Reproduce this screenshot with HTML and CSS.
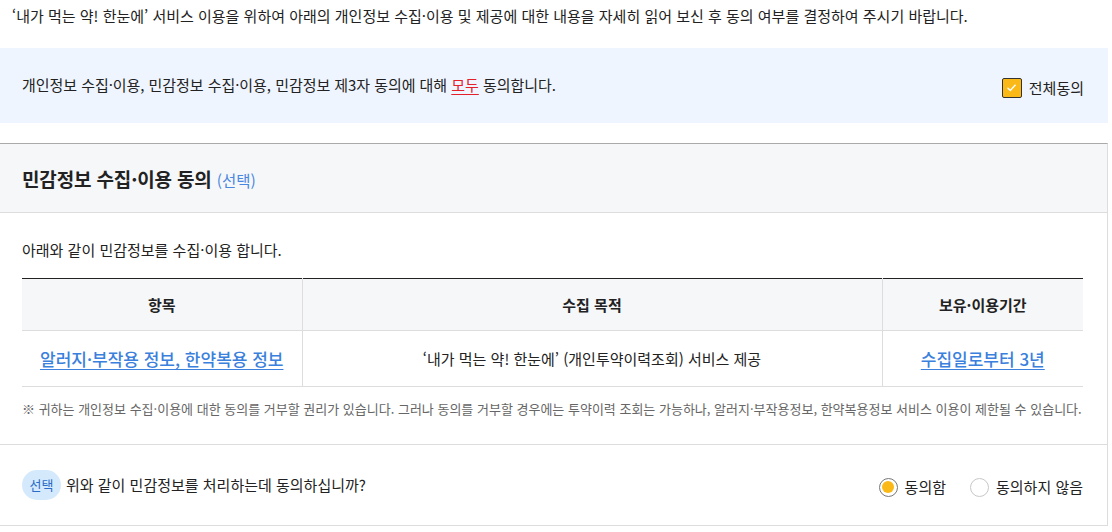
FILE: index.html
```html
<!DOCTYPE html>
<html lang="ko">
<head>
<meta charset="utf-8">
<title>민감정보 수집·이용 동의</title>
<link rel="stylesheet" href="styles.css">
</head>
<body>
<div class="page">
  <p class="intro">‘내가 먹는 약! 한눈에’ 서비스 이용을 위하여 아래의 개인정보 수집·이용 및 제공에 대한 내용을 자세히 읽어 보신 후 동의 여부를 결정하여 주시기 바랍니다.</p>

  <div class="all-agree">
    <p class="all-text">개인정보 수집·이용, 민감정보 수집·이용, 민감정보 제3자 동의에 대해 <span class="red">모두</span> 동의합니다.</p>
    <label class="check">
      <span class="check-box"><svg width="13" height="13" viewBox="0 0 13 13"><path d="M2.5 6.8 L5.3 9.4 L10.5 3.8" fill="none" stroke="#fff" stroke-width="1.4"/></svg></span>
      <span class="check-label">전체동의</span>
    </label>
  </div>

  <section class="card">
    <div class="card-head">
      <h2 class="card-title">민감정보 수집·이용 동의 <span class="opt">(선택)</span></h2>
    </div>
    <div class="card-body">
      <p class="lead">아래와 같이 민감정보를 수집·이용 합니다.</p>
      <table class="info">
        <colgroup>
          <col class="c1"><col class="c2"><col class="c3">
        </colgroup>
        <thead>
          <tr><th>항목</th><th>수집 목적</th><th>보유·이용기간</th></tr>
        </thead>
        <tbody>
          <tr>
            <td><a class="link">알러지·부작용 정보, 한약복용 정보</a></td>
            <td>‘내가 먹는 약! 한눈에’ (개인투약이력조회) 서비스 제공</td>
            <td><a class="link">수집일로부터 3년</a></td>
          </tr>
        </tbody>
      </table>
      <p class="note">※ 귀하는 개인정보 수집·이용에 대한 동의를 거부할 권리가 있습니다. 그러나 동의를 거부할 경우에는 투약이력 조회는 가능하나, 알러지·부작용정보, 한약복용정보 서비스 이용이 제한될 수 있습니다.</p>
    </div>
    <div class="question">
      <p class="q-text"><span class="badge">선택</span>위와 같이 민감정보를 처리하는데 동의하십니까?</p>
      <div class="radios">
        <label class="radio on"><span class="dot"></span>동의함</label>
        <label class="radio"><span class="dot"></span>동의하지 않음</label>
      </div>
    </div>
  </section>
</div>
</body>
</html>
```

FILE: styles.css
```css
* { box-sizing: border-box; }
html, body { margin: 0; padding: 0; background: #fff; }
body {
  font-family: "Noto Sans CJK KR", "Noto Sans", sans-serif;
  color: #222;
  font-size: 15px;
}
p { margin: 0; }

.page { width: 1108px; }

.intro {
  height: 48px;
  padding: 6px 0 0 12px;
  line-height: 20px;
  font-size: 15px;
  color: #222;
}

.all-agree {
  height: 75px;
  background: #eff5fe;
  display: flex;
  align-items: center;
  justify-content: space-between;
  padding: 0 24px 0 22px;
}
.all-text {
  line-height: 20px;
  padding-bottom: 2px;
  letter-spacing: -0.05px;
}
.red { color: #e4202a; text-decoration: underline; text-underline-offset: 3px; }

.check {
  display: flex;
  align-items: center;
  gap: 7px;
  padding-top: 4px;
}
.check-box {
  width: 20px; height: 20px;
  border: 1px solid #333;
  border-radius: 2px;
  background: #fbb917;
  display: flex; align-items: center; justify-content: center;
}
.check-label { line-height: 20px; }

.card {
  margin-top: 20px;
  border-top: 1px solid #aaa;
  border-right: 1px solid #ddd;
  border-bottom: 1px solid #ddd;
}
.card-head {
  height: 69px;
  background: #f6f7f9;
  border-bottom: 1px solid #ddd;
  display: flex;
  align-items: center;
  padding: 2px 22px 0;
}
.card-title {
  margin: 0;
  font-size: 19px;
  font-weight: 700;
  letter-spacing: -0.15px;
  line-height: 24px;
}
.opt { font-size: 15.5px; font-weight: 400; color: #4a87e0; letter-spacing: 0; }

.card-body { padding: 27px 24px 0 22px; border-bottom: 1px solid #ddd; }
.lead { line-height: 20px; }

.info {
  margin-top: 18px;
  width: 100%;
  border-collapse: collapse;
  table-layout: fixed;
  border-top: 1px solid #222;
}
.c1 { width: 280px; } .c2 { width: 580px; } .c3 { width: 201px; }
.info th, .info td {
  text-align: center;
  border-bottom: 1px solid #ddd;
  border-left: 1px solid #ddd;
  padding: 0;
}
.info th:first-child, .info td:first-child { border-left: none; }
.info th {
  height: 52px;
  background: #f6f7f9;
  font-weight: 700;
}
.info td { height: 56px; }
.link {
  color: #3a80dc;
  text-decoration: underline;
  text-underline-offset: 3px;
  font-size: 17px;
  font-weight: 500;
}

.note {
  margin-top: 13px;
  padding-bottom: 26px;
  font-size: 13px;
  line-height: 18px;
  color: #666;
}

.question {
  height: 80px;
  display: flex;
  align-items: center;
  justify-content: space-between;
  padding: 0 24px 0 22px;
}
.q-text {
  display: flex;
  align-items: center;
  gap: 5px;
  line-height: 20px;
}
.badge {
  width: 39px; height: 30px;
  border-radius: 15px;
  background: #d4eafc;
  color: #2b6cc8;
  font-size: 13px;
  display: flex; align-items: center; justify-content: center;
}
.radios { display: flex; gap: 24px; align-items: center; padding-top: 4px; }
.radio { display: flex; align-items: center; gap: 7px; line-height: 20px; }
.dot {
  width: 19px; height: 19px;
  border-radius: 50%;
  border: 1px solid #c8c8c8;
  background: #fff;
  display: flex; align-items: center; justify-content: center;
}
.radio.on .dot { border-color: #777; }
.radio.on .dot::after {
  content: "";
  width: 12px; height: 12px;
  border-radius: 50%;
  background: #fbb917;
}
```
